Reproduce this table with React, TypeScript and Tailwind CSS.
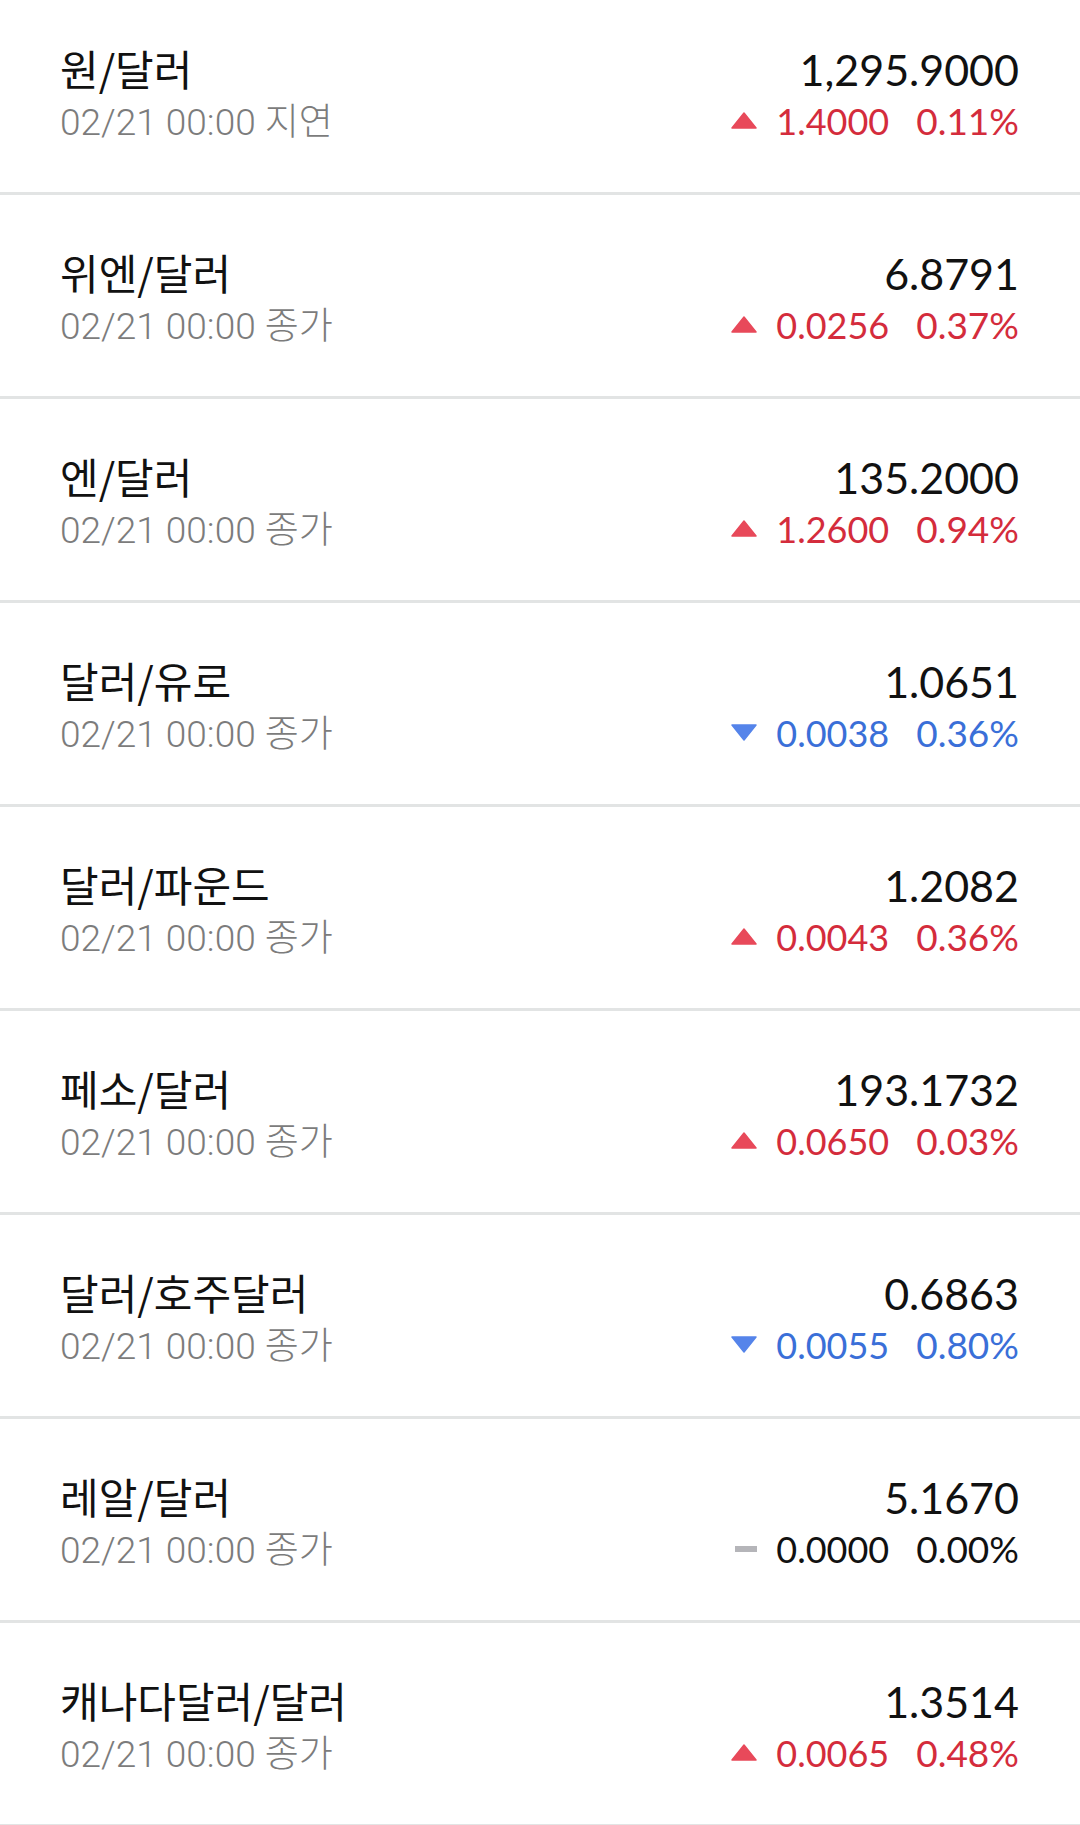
import React from "react";

type Dir = "up" | "down" | "flat";

interface Rate {
  name: string;
  note: string;
  price: string;
  change: string;
  pct: string;
  dir: Dir;
}

const rates: Rate[] = [
  { name: "원/달러", note: "지연", price: "1,295.9000", change: "1.4000", pct: "0.11%", dir: "up" },
  { name: "위엔/달러", note: "종가", price: "6.8791", change: "0.0256", pct: "0.37%", dir: "up" },
  { name: "엔/달러", note: "종가", price: "135.2000", change: "1.2600", pct: "0.94%", dir: "up" },
  { name: "달러/유로", note: "종가", price: "1.0651", change: "0.0038", pct: "0.36%", dir: "down" },
  { name: "달러/파운드", note: "종가", price: "1.2082", change: "0.0043", pct: "0.36%", dir: "up" },
  { name: "페소/달러", note: "종가", price: "193.1732", change: "0.0650", pct: "0.03%", dir: "up" },
  { name: "달러/호주달러", note: "종가", price: "0.6863", change: "0.0055", pct: "0.80%", dir: "down" },
  { name: "레알/달러", note: "종가", price: "5.1670", change: "0.0000", pct: "0.00%", dir: "flat" },
  { name: "캐나다달러/달러", note: "종가", price: "1.3514", change: "0.0065", pct: "0.48%", dir: "up" },
];

const Arrow = ({ dir }: { dir: Dir }) => {
  if (dir === "flat") {
    return <span className="block h-[6px] w-[22px] bg-[#b5b5b9]" />;
  }
  return (
    <svg width="26" height="17" viewBox="0 0 26 17" className="block">
      {dir === "up" ? (
        <path d="M13 1 L25 16 L1 16 Z" fill="#e8495a" strokeLinejoin="round" stroke="#e8495a" strokeWidth="1.5" />
      ) : (
        <path d="M1 1 L25 1 L13 16 Z" fill="#5584ea" strokeLinejoin="round" stroke="#5584ea" strokeWidth="1.5" />
      )}
    </svg>
  );
};

const App = () => {
  return (
    <div className="min-h-screen w-[1080px] overflow-hidden bg-white">
      {rates.map((r, i) => {
        const color =
          r.dir === "up" ? "text-[#d42c3c]" : r.dir === "down" ? "text-[#3a6fd8]" : "text-[#111111]";
        return (
          <div
            key={r.name}
            className={`flex items-center justify-between border-b-[3px] border-[#e2e4e4] pl-[60px] pr-[61px] ${
              i === 0 ? "h-[195px] pb-[9px]" : "h-[204px]"
            }`}
          >
            <div className="flex flex-col pt-[4px]">
              <span className="font-['Noto_Sans_CJK_KR',sans-serif] text-[42px] leading-[52px] text-[#111111]">
                {r.name}
              </span>
              <span className="mt-[6px] font-['Roboto','Noto_Sans_CJK_KR',sans-serif] text-[37px] font-light leading-[46px] text-[#7c7c7c]">
                02/21 00:00 {r.note}
              </span>
            </div>
            <div className="flex flex-col items-end font-['Lato','Noto_Sans',sans-serif]">
              <span className="pt-[4px] text-[43px] leading-[52px] text-[#111111]">{r.price}</span>
              <div className={`mt-[2px] flex items-center text-[36px] leading-[46px] ${color}`}>
                <span className="mr-[19px]">
                  <Arrow dir={r.dir} />
                </span>
                <span>{r.change}</span>
                <span className="ml-[27px] text-[37px]">{r.pct}</span>
              </div>
            </div>
          </div>
        );
      })}
    </div>
  );
};

export default App;
